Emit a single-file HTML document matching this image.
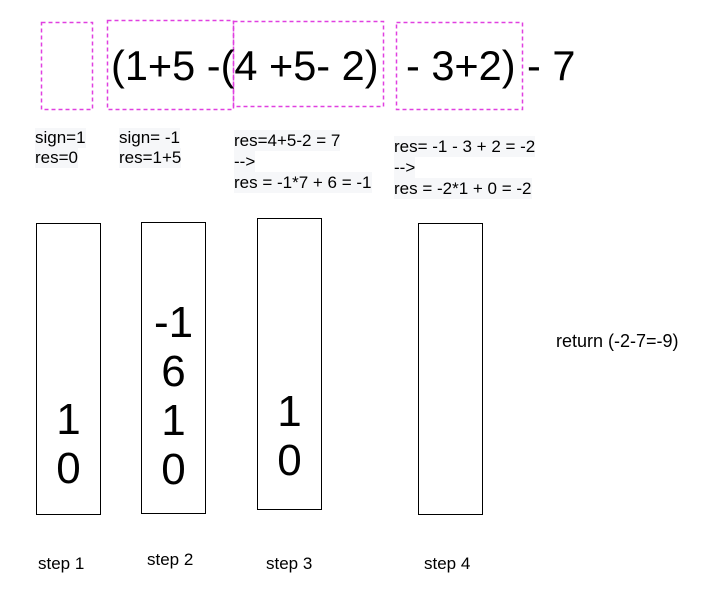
<!DOCTYPE html>
<html><head><style>
body{margin:0;width:706px;height:600px;background:#fff;position:relative;overflow:hidden;font-family:"Liberation Sans",Arial,sans-serif;color:#000}
svg.d{position:absolute;left:0;top:0}
.s{position:absolute;border:1.3px solid #000;box-sizing:border-box;width:65px;height:292px;font-size:44px;line-height:49px;text-align:center}
.t{position:absolute;font-size:17px;line-height:20px;white-space:nowrap}
.t span{background:#f6f7f9;display:inline-block}
.l{position:absolute;font-size:17px;white-space:nowrap}
.b{position:absolute;top:43px;font-size:41.5px;line-height:46px;white-space:pre}
</style></head><body>
<svg class="d" width="706" height="130" fill="none" stroke="#e040e0" stroke-width="1.5" stroke-dasharray="4 3">
<rect x="41.5" y="22.5" width="51" height="87"/>
<rect x="107.5" y="20.5" width="126" height="89"/>
<rect x="233.5" y="21.5" width="150" height="85"/>
<rect x="396.5" y="22.5" width="126" height="87"/>
</svg>
<div class="b" style="left:111px">(1+5 -(4 +5- 2)</div>
<div class="b" style="left:406px">- 3+2)</div>
<div class="b" style="left:527px">- 7</div>

<div class="t" style="left:35px;top:128px"><span>sign=1</span><br><span>res=0</span></div>
<div class="t" style="left:119px;top:128px"><span>sign= -1</span><br><span>res=1+5</span></div>
<div class="t" style="left:234px;top:130px;line-height:21px"><span>res=4+5-2 = 7</span><br><span>--&gt;</span><br><span>res = -1*7 + 6 = -1</span></div>
<div class="t" style="left:394px;top:136px;line-height:21px"><span>res= -1 - 3 + 2 = -2</span><br><span>--&gt;</span><br><span>res = -2*1 + 0 = -2</span></div>

<div class="s" style="left:36px;top:223px"><div style="position:absolute;left:0;right:0;top:171px">1<br>0</div></div>
<div class="s" style="left:141px;top:222px"><div style="position:absolute;left:0;right:0;top:75px">-1<br>6<br>1<br>0</div></div>
<div class="s" style="left:257px;top:218px"><div style="position:absolute;left:0;right:0;top:168px">1<br>0</div></div>
<div class="s" style="left:418px;top:223px"></div>

<div class="l" style="left:556px;top:331px;font-size:18px">return (-2-7=-9)</div>
<div class="l" style="left:38px;top:554px">step 1</div>
<div class="l" style="left:147px;top:550px">step 2</div>
<div class="l" style="left:266px;top:554px">step 3</div>
<div class="l" style="left:424px;top:554px">step 4</div>
</body></html>
